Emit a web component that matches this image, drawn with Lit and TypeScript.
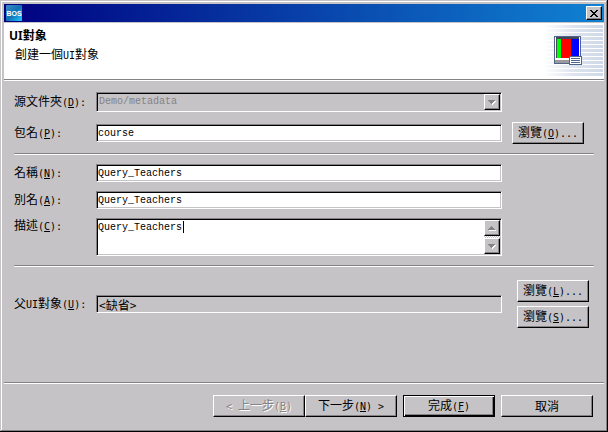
import { LitElement, html, css, svg } from "lit";
import { customElement } from "lit/decorators.js";

const range = (n: number) => Array.from({ length: n }, (_, i) => i);

const bannerArt = svg`
  <defs>
    <linearGradient id="fade" x1="0" x2="1">
      <stop offset="0" stop-color="#fff"></stop>
      <stop offset="0.5" stop-color="#dee4f0"></stop>
      <stop offset="1" stop-color="#ced8e8"></stop>
    </linearGradient>
  </defs>
  ${range(13).map((i) => svg`<rect x="0" y=${2 + i * 4} width="60" height="3" fill="url(#fade)"></rect>`)}
  <rect x="11" y="13" width="27" height="28" fill="#50648c"></rect>
  <rect x="12" y="14" width="25" height="23" fill="#fff"></rect>
  <rect x="13" y="14" width="23" height="21" fill="#404858"></rect>
  <rect x="14" y="16" width="4" height="19" fill="#00ff00"></rect>
  <rect x="18" y="16" width="10" height="19" fill="#ff0000"></rect>
  <rect x="28" y="16" width="8" height="19" fill="#0000ff"></rect>
  <rect x="12" y="37" width="25" height="3" fill="#9c9a9c"></rect>
  <rect x="26" y="33" width="13" height="9" fill="#50648c"></rect>
  <rect x="27" y="34" width="11" height="7" fill="#fff"></rect>
  <path d="M28 35h9v1h-9zM28 37h9v1h-9zM28 39h9v1h-9z" fill="#50648c"></path>
`;

@customElement("app-root")
export class AppRoot extends LitElement {
  static styles = css`
    :host {
      --face: #c6c3c6;
      --shade: #848284;
      --cjk: "Noto Sans CJK TC", "Noto Sans CJK SC", sans-serif;
      --mono: "DejaVu Sans Mono", "Noto Sans CJK TC", monospace;
      display: flex;
      flex-direction: column;
      box-sizing: border-box;
      min-height: 100vh;
      padding: 4px;
      background: var(--face);
      box-shadow: inset -1px -1px #000, inset 1px 1px var(--face),
        inset -2px -2px var(--shade), inset 2px 2px #fff;
      color: #000;
      font: 12px/14px var(--cjk);
    }
    * { box-sizing: border-box; }
    button, input, select, textarea {
      margin: 0;
      border-radius: 0;
      color: inherit;
      outline: none;
    }
    .latin { font: 10px/14px var(--mono); }
    u { text-underline-offset: 1px; }

    .titlebar {
      display: flex;
      align-items: center;
      justify-content: space-between;
      height: 18px;
      padding: 0 2px;
      background: linear-gradient(90deg, #000080, #1082d2);
    }
    .logo { display: block; width: 16px; height: 16px; }
    .logo-text { font: bold 7px "Liberation Sans", sans-serif; }
    .raised {
      border: 1px solid;
      border-color: #fff #000 #000 #fff;
      background: var(--face);
      box-shadow: inset -1px -1px var(--shade);
      padding: 0;
    }
    .close { display: flex; align-items: center; justify-content: center; width: 16px; height: 14px; }
    .banner {
      display: flex;
      justify-content: space-between;
      height: 58px;
      margin-top: 1px;
      padding-right: 1px;
      background: #fff;
      border-bottom: 1px solid #fff;
      box-shadow: inset 0 -1px var(--shade);
    }
    .heading { padding: 5px; }
    h1 { margin: 0; font: bold 12px/16px "Noto Sans", var(--cjk); }
    p { margin: 3px 6px; }
    .art { width: 60px; height: 56px; }

    form { display: flex; flex: 1; flex-direction: column; justify-content: space-between; }
    .section {
      display: grid;
      grid-template-columns: 82px 1fr 92px;
      align-items: center;
      row-gap: 9px;
      padding: 9px 0;
    }
    .fields { padding: 2px 10px 0; }
    .source { row-gap: 10px; }
    .parent { padding-top: 13px; }
    label { grid-column: 1; white-space: nowrap; }
    .top { align-self: start; }
    hr { margin: 0; border: 0; height: 2px; background: linear-gradient(var(--shade) 50%, #fff 50%); }

    .field {
      grid-column: 2;
      display: block;
      width: 100%;
      height: 18px;
      padding: 0 1px;
      border: 1px solid;
      border-color: var(--shade) #fff #fff var(--shade);
      box-shadow: inset 1px 1px #000, inset -1px -1px var(--face);
      background: #fff;
      font: 10px/16px "Liberation Mono", monospace;
    }
    .wrap { position: relative; grid-column: 2; }
    .combo {
      appearance: none;
      height: 20px;
      padding: 0 2px;
      background: var(--face);
      color: var(--shade);
      opacity: 1;
    }
    .locked { padding: 0 2px; background: var(--face); font: 12px/14px var(--cjk); }
    .area { height: 38px; padding: 1px 18px 0 1px; resize: none; overflow: hidden; }
    .arrow { display: flex; align-items: center; justify-content: center; width: 16px; height: 16px; }
    .rail {
      position: absolute;
      top: 2px;
      right: 2px;
      bottom: 2px;
      display: flex;
      flex-direction: column;
      justify-content: space-between;
      background: repeating-conic-gradient(#fff 0 25%, var(--face) 0 50%) 0 0 / 2px 2px;
    }
    .caret { position: absolute; left: 87px; top: 3px; width: 1px; height: 12px; background: #000; }

    .push { height: 22px; font: 12px/14px var(--cjk); white-space: nowrap; }
    .browse { width: 72px; justify-self: center; }
    .stack { display: flex; flex-direction: column; align-items: flex-end; gap: 4px; padding-right: 5px; }
    .footer { display: flex; justify-content: flex-end; gap: 6px; padding: 11px; }
    .pair { display: flex; }
    .wide { width: 92px; }
    .wide:disabled { color: var(--shade); text-shadow: 1px 1px #fff; }
    .default { border-color: #000; box-shadow: inset 1px 1px #fff, inset -1px -1px #000, inset -2px -2px var(--shade); }
  `;

  private key(letter: string, tail = "") {
    return html`<span class="latin">(<u>${letter}</u>)${tail}</span>`;
  }

  private label(id: string, text: unknown, letter: string, cls = "") {
    return html`<label class=${cls} for=${id}>${text}${this.key(letter, ":")}</label>`;
  }

  private browse(letter: string) {
    return html`<button type="button" class="raised push browse">瀏覽${this.key(letter, "...")}</button>`;
  }

  private arrow(up: boolean) {
    const d = up ? "M3 0h1v1h1v1h1v1h1v1H0V3h1V2h1V1h1z" : "M0 0h7v1H6v1H5v1H4v1H3V3H2V2H1V1H0z";
    return html`<svg width="8" height="5" viewBox="0 0 8 5" shape-rendering="crispEdges" aria-hidden="true">
      <path d=${d} fill="#fff" transform="translate(1 1)"></path>
      <path d=${d} fill="#848284"></path>
    </svg>`;
  }

  render() {
    return html`
      <header>
        <div class="titlebar">
          <svg class="logo" viewBox="0 0 16 16" aria-hidden="true">
            <defs>
              <linearGradient id="sky" x1="0" y1="0" x2="1" y2="1">
                <stop offset="0" stop-color="#3c8cc4"></stop>
                <stop offset="0.5" stop-color="#1070b4"></stop>
                <stop offset="1" stop-color="#20c8ff"></stop>
              </linearGradient>
            </defs>
            <rect width="16" height="16" rx="1" fill="url(#sky)"></rect>
            <text class="logo-text" x="8" y="11" text-anchor="middle" fill="#fff">BOS</text>
          </svg>
          <button type="button" class="raised close" aria-label="關閉">
            <svg width="8" height="7" viewBox="0 0 8 7" shape-rendering="crispEdges" aria-hidden="true">
              <path d="M0 0h2v1h1v1h2V1h1V0h2v1H7v1H6v1H5v1h1v1h1v1h1v1H6V6H5V5H3v1H2v1H0V6h1V5h1V4h1V3H2V2H1V1H0z"></path>
            </svg>
          </button>
        </div>
        <div class="banner">
          <div class="heading">
            <h1>UI對象</h1>
            <p>創建一個<span class="latin">UI</span>對象</p>
          </div>
          <svg class="art" viewBox="0 0 60 56" shape-rendering="crispEdges" aria-hidden="true">${bannerArt}</svg>
        </div>
      </header>
      <form @submit=${(e: Event) => e.preventDefault()}>
        <div class="fields">
          <div class="section source">
            ${this.label("folder", "源文件夾", "D")}
            <div class="wrap">
              <select id="folder" class="field combo" disabled><option>Demo/metadata</option></select>
              <div class="rail"><span class="raised arrow">${this.arrow(false)}</span></div>
            </div>
            ${this.label("package", "包名", "P")}
            <input id="package" class="field" .value=${"course"} />
            ${this.browse("O")}
          </div>
          <hr />
          <div class="section">
            ${this.label("name", "名稱", "N")}
            <input id="name" class="field" .value=${"Query_Teachers"} />
            ${this.label("alias", "別名", "A")}
            <input id="alias" class="field" .value=${"Query_Teachers"} />
            ${this.label("desc", "描述", "C", "top")}
            <div class="wrap">
              <textarea id="desc" class="field area" spellcheck="false" .value=${"Query_Teachers"}></textarea>
              <span class="caret"></span>
              <div class="rail">
                <button type="button" class="raised arrow" aria-label="向上" disabled>${this.arrow(true)}</button>
                <button type="button" class="raised arrow" aria-label="向下" disabled>${this.arrow(false)}</button>
              </div>
            </div>
          </div>
          <hr />
          <div class="section parent">
            ${this.label("parent", html`父<span class="latin">UI</span>對象`, "U")}
            <input id="parent" class="field locked" readonly .value=${"<缺省>"} />
            <div class="stack">${this.browse("L")}${this.browse("S")}</div>
          </div>
        </div>
        <div>
          <hr />
          <div class="footer">
            <div class="pair">
              <button type="button" class="raised push wide" disabled><span class="latin">&lt; </span>上一步${this.key("B")}</button>
              <button type="button" class="raised push wide">下一步${this.key("N", " >")}</button>
            </div>
            <button type="submit" class="raised push wide default">完成${this.key("F")}</button>
            <button type="button" class="raised push wide">取消</button>
          </div>
        </div>
      </form>
    `;
  }
}
